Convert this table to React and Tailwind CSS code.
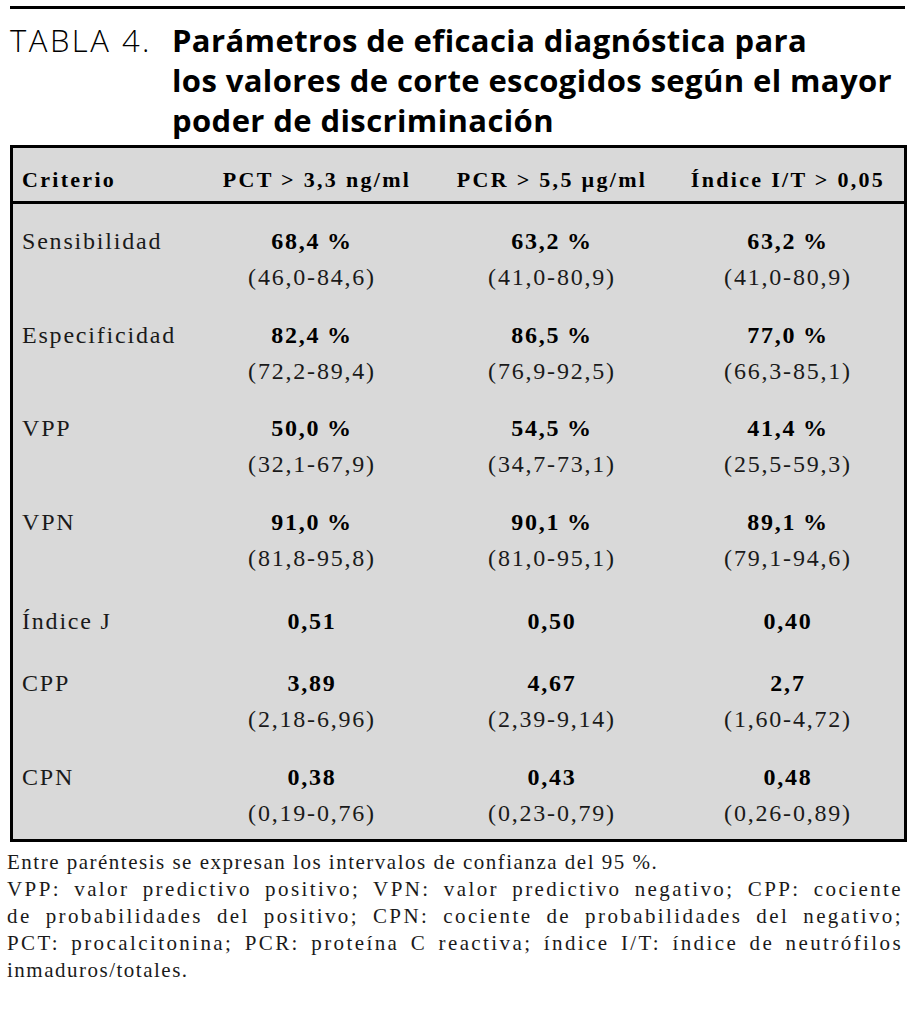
const rows = [
  {
    label: "Sensibilidad",
    values: [
      ["68,4\u2009%", "(46,0-84,6)"],
      ["63,2\u2009%", "(41,0-80,9)"],
      ["63,2\u2009%", "(41,0-80,9)"],
    ],
    pb: "pb-[22px]",
  },
  {
    label: "Especificidad",
    values: [
      ["82,4\u2009%", "(72,2-89,4)"],
      ["86,5\u2009%", "(76,9-92,5)"],
      ["77,0\u2009%", "(66,3-85,1)"],
    ],
    pb: "pb-[21px]",
  },
  {
    label: "VPP",
    values: [
      ["50,0\u2009%", "(32,1-67,9)"],
      ["54,5\u2009%", "(34,7-73,1)"],
      ["41,4\u2009%", "(25,5-59,3)"],
    ],
    pb: "pb-[22px]",
  },
  {
    label: "VPN",
    values: [
      ["91,0\u2009%", "(81,8-95,8)"],
      ["90,1\u2009%", "(81,0-95,1)"],
      ["89,1\u2009%", "(79,1-94,6)"],
    ],
    pb: "pb-[27px]",
  },
  {
    label: "Índice J",
    values: [["0,51"], ["0,50"], ["0,40"]],
    pb: "pb-[26px]",
  },
  {
    label: "CPP",
    values: [
      ["3,89", "(2,18-6,96)"],
      ["4,67", "(2,39-9,14)"],
      ["2,7", "(1,60-4,72)"],
    ],
    pb: "pb-[22px]",
  },
  {
    label: "CPN",
    values: [
      ["0,38", "(0,19-0,76)"],
      ["0,43", "(0,23-0,79)"],
      ["0,48", "(0,26-0,89)"],
    ],
    pb: "pb-[8px]",
  },
];

const notes = [
  "VPP: valor predictivo positivo; VPN: valor predictivo negativo; CPP: cociente",
  "de probabilidades del positivo; CPN: cociente de probabilidades del negativo;",
  "PCT: procalcitonina; PCR: proteína C reactiva; índice I/T: índice de neutrófilos",
];

const serif = "font-['Liberation_Serif',_'Times_New_Roman',_serif]";
const cols = "grid grid-cols-[179px_240px_240px_1fr]";

export default function App() {
  return (
    <div className="w-[915px] h-[1015px] bg-white text-black overflow-hidden">
      <div className="px-[10px] pt-[6px]">
        {/* Title */}
        <div className="w-[895px] border-t-[3px] border-black" />
        <div className="flex pt-[11px] font-['Open_Sans',_'Lato',_sans-serif] text-[31px] leading-[40px]">
          <div className="w-[162px] shrink-0 font-light tracking-[2.5px]">TABLA 4.</div>
          <div className="font-bold tracking-[0.4px]">
            Parámetros de eficacia diagnóstica para
            <br />
            los valores de corte escogidos según el mayor
            <br />
            poder de discriminación
          </div>
        </div>

        {/* Table */}
        <div className={`mt-[5px] w-[897px] border-[3px] border-black bg-[#d9d9d9] ${serif}`}>
          <div
            className={`${cols} border-b-[3px] border-black pt-[14px] pb-[3px] text-[22px] leading-[36px] font-bold tracking-[2.3px]`}
          >
            <div className="pl-[9px]">Criterio</div>
            <div className="text-center pl-[10px] whitespace-nowrap">PCT &gt; 3,3 ng/ml</div>
            <div className="text-center whitespace-nowrap">PCR &gt; 5,5 µg/ml</div>
            <div className="text-center whitespace-nowrap">Índice I/T &gt; 0,05</div>
          </div>

          <div className="pt-[19px] text-[24px] leading-[36px] tracking-[1.8px]">
            {rows.map((row) => (
              <div key={row.label} className={`${cols} ${row.pb}`}>
                <div className="pl-[9px] text-[#1a1a1a]">{row.label}</div>
                {row.values.map((v, i) => (
                  <div key={i} className="text-center">
                    <div className="font-bold">{v[0]}</div>
                    {v[1] && <div className="text-[#1a1a1a]">{v[1]}</div>}
                  </div>
                ))}
              </div>
            ))}
          </div>
        </div>

        {/* Notes */}
        <div
          className={`-ml-[3px] mt-[7px] w-[896px] text-[21px] leading-[27px] tracking-[1.5px] text-[#1a1a1a] ${serif}`}
        >
          <div className="whitespace-nowrap">Entre paréntesis se expresan los intervalos de confianza del 95 %.</div>
          {notes.map((line) => (
            <div key={line} className="text-justify [text-align-last:justify] tracking-[2.4px]">
              {line}
            </div>
          ))}
          <div className="whitespace-nowrap">inmaduros/totales.</div>
        </div>
      </div>
    </div>
  );
}
